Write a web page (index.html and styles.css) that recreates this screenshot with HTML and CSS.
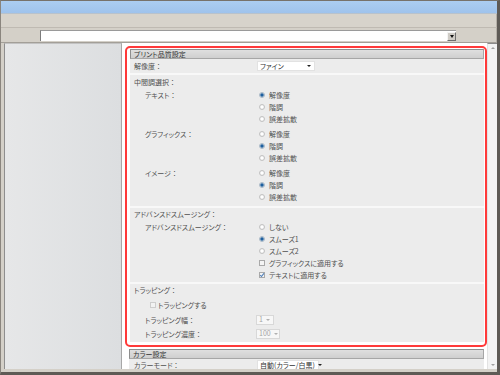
FILE: index.html
```html
<!DOCTYPE html>
<html lang="ja">
<head>
<meta charset="utf-8">
<title>プリント品質設定</title>
<link rel="stylesheet" href="styles.css">
</head>
<body>
<div class="window">
  <div class="titlebar"></div>
  <div class="toolbar"></div>
  <div class="addressbar">
    <div class="combo"><span class="combo-field"></span><span class="combo-btn"><i class="tri"></i></span></div>
  </div>
  <div class="main">
    <aside class="sidebar"></aside>
    <div class="pane">
      <div class="highlight">
        <div class="sec-head">プリント品質設定</div>
        <div class="sec-body">
          <div class="field first sep">
            <div class="label">解像度<span class="c">：</span></div>
            <div class="select w58">ファイン<i class="arrow"></i></div>
          </div>

          <div class="group sep pb3">
            <div class="heading">中間調選択<span class="c">：</span></div>
            <div class="subfield">
              <div class="label sub">テキスト<span class="c">：</span></div>
              <div class="options">
                <div class="opt"><span class="radio on"></span>解像度</div>
                <div class="opt"><span class="radio"></span>階調</div>
                <div class="opt"><span class="radio"></span>誤差拡散</div>
              </div>
            </div>
            <div class="subfield gap">
              <div class="label sub">グラフィックス<span class="c">：</span></div>
              <div class="options">
                <div class="opt"><span class="radio"></span>解像度</div>
                <div class="opt"><span class="radio on"></span>階調</div>
                <div class="opt"><span class="radio"></span>誤差拡散</div>
              </div>
            </div>
            <div class="subfield gap">
              <div class="label sub">イメージ<span class="c">：</span></div>
              <div class="options">
                <div class="opt"><span class="radio"></span>解像度</div>
                <div class="opt"><span class="radio on"></span>階調</div>
                <div class="opt"><span class="radio"></span>誤差拡散</div>
              </div>
            </div>
          </div>

          <div class="group sep pb1">
            <div class="heading">アドバンスドスムージング<span class="c">：</span></div>
            <div class="subfield">
              <div class="label sub">アドバンスドスムージング<span class="c">：</span></div>
              <div class="options">
                <div class="opt"><span class="radio"></span>しない</div>
                <div class="opt"><span class="radio on"></span>スムーズ1</div>
                <div class="opt"><span class="radio"></span>スムーズ2</div>
                <div class="opt"><span class="check"></span>グラフィックスに適用する</div>
                <div class="opt"><span class="check on"><svg viewBox="0 0 6 6" width="6" height="6"><path d="M1.2 3.1 L2.5 4.5 L4.9 1.3" fill="none" stroke="#4f7fb8" stroke-width="1.1"/></svg></span>テキストに適用する</div>
              </div>
            </div>
          </div>

          <div class="group pb2">
            <div class="heading">トラッピング<span class="c">：</span></div>
            <div class="trap-check"><span class="check off"></span>トラッピングする</div>
            <div class="field trap-w">
              <div class="label sub">トラッピング幅<span class="c">：</span></div>
              <div class="select disabled w17">1<i class="arrow"></i></div>
            </div>
            <div class="field trap-d">
              <div class="label sub">トラッピング濃度<span class="c">：</span></div>
              <div class="select disabled w23">100<i class="arrow"></i></div>
            </div>
          </div>
        </div>
      </div>

      <div class="sec-head color-head">カラー設定</div>
      <div class="color-body">
        <div class="field color-row">
          <div class="label">カラーモード<span class="c">：</span></div>
          <div class="select w60">自動(カラー/白黒)<i class="arrow"></i></div>
        </div>
      </div>
    </div>
    <div class="scrollbar"><i class="up"></i><i class="down"></i></div>
  </div>
</div>
</body>
</html>
```

FILE: styles.css
```css
* { box-sizing: border-box; margin: 0; padding: 0; }
html, body { width: 500px; height: 375px; overflow: hidden; background: #d4d0c8; }
body {
  font-family: "Noto Sans CJK JP", "Noto Sans", sans-serif;
  font-size: 7px;
  color: #505050;
  font-feature-settings: "palt";
}
.c { font-feature-settings: normal; }
.window {
  width: 500px;
  height: 375px;
  background: #d4d0c8;
  border-style: solid;
  border-color: #77726b #5e5a55 #5e5a55 #8a857e;
  border-width: 1px 3px 3px 1px;
  padding-bottom: 3px;
  display: flex;
  flex-direction: column;
}
.titlebar {
  height: 13px;
  flex: none;
  background: linear-gradient(#abcdf1, #9fc3ec);
  border-bottom: 1px solid #b8c2cc;
}
.toolbar {
  height: 14px;
  flex: none;
  background: #d7d3cb;
  border-bottom: 1px solid #bfbab2;
  border-right: 1px solid #b5b0a8;
}
.addressbar {
  height: 15px;
  flex: none;
  background: #d4d0c8;
  border-bottom: 1px solid #a39f98;
  border-right: 1px solid #b5b0a8;
  padding: 2px 0 0 39px;
}
.combo {
  width: 416px;
  height: 11px;
  display: flex;
  background: #fff;
  border-left: 1px solid #7c7c7c;
  border-top: 1px solid #9a9a9a;
}
.combo-field { flex: 1; }
.combo-btn {
  width: 9px;
  height: 9px;
  margin-top: 1px;
  background: #cfccc6;
  border: 1px solid;
  border-color: #f4f4f4 #6e6e6e #6e6e6e #f4f4f4;
  display: flex;
  align-items: center;
  justify-content: center;
}
.tri {
  width: 0; height: 0;
  border-left: 2.5px solid transparent;
  border-right: 2.5px solid transparent;
  border-top: 3px solid #111;
}
.main {
  flex: 1;
  display: flex;
  padding-left: 3px;
  min-height: 0;
}
.sidebar {
  width: 118px;
  flex: none;
  border-left: 1px solid #8e8e8e;
  border-right: 1px solid #a8a8a8;
  border-top: 1px solid #c2c2c2;
  background: linear-gradient(to right, #e6e7e8, #dcdee0);
}
.pane {
  width: 365px;
  flex: none;
  background: #fff;
  overflow: hidden;
}
.scrollbar {
  width: 10px;
  flex: none;
  background: #f3f3f3;
  border-top: 1px solid #8a8a8a;
  border-left: 1px solid #e2e2e2;
  display: flex;
  flex-direction: column;
  justify-content: space-between;
  align-items: center;
  padding: 3px 0 3px;
}
.up, .down {
  width: 0; height: 0;
  border-left: 2px solid transparent;
  border-right: 2px solid transparent;
}
.up { border-bottom: 2px solid #a0a0a0; }
.down { border-top: 2px solid #a0a0a0; }

.highlight {
  margin: 3px 0 0 3px;
  border: 2px solid #ff3a3a;
  border-radius: 5px;
  padding: 1px 1px 3px 3px;
  background: #fff;
}
.sec-head {
  height: 10px;
  line-height: 8px;
  padding-left: 3px;
  color: #333;
  background: linear-gradient(#dfdfdf, #cfcfcf);
  border: 1px solid #a6a6a6;
  border-top-color: #8e8e8e;
  border-left-color: #8e8e8e;
  white-space: nowrap;
}
.sec-body {
  background: #ececec;
  padding-bottom: 2px;
}
.sep { border-bottom: 2px solid #f8f8f8; }
.pb3 { padding-bottom: 3px; }
.pb1 { padding-bottom: 1px; }
.pb2 { padding-bottom: 0; }

.field {
  display: flex;
  align-items: center;
}
.field.first { height: 16px; }
.label {
  width: 127px;
  flex: none;
  padding-left: 4px;
  white-space: nowrap;
}
.label.sub { padding-left: 15px; line-height: 12px; }
.heading {
  height: 14px;
  line-height: 14px;
  padding-left: 4px;
  white-space: nowrap;
}
.subfield {
  display: flex;
  align-items: flex-start;
}
.subfield.gap { margin-top: 3px; }
.options { display: flex; flex-direction: column; }
.opt {
  height: 12px;
  display: flex;
  align-items: center;
  white-space: nowrap;
}
.radio {
  width: 6px;
  height: 6px;
  flex: none;
  border-radius: 50%;
  border: 1px solid #c2c2c2;
  background: radial-gradient(circle, #ffffff 30%, #e2e2e2 100%);
  margin: 0 4px 0 2px;
}
.radio.on {
  border-color: #a9b8c6;
  background: radial-gradient(circle, #1f5f9e 0 1.3px, #8fb0d0 1.8px, #e9eef4 2.6px);
}
.check {
  width: 6px;
  height: 6px;
  flex: none;
  border: 1px solid #a9a9a9;
  background: #f4f4f4;
  margin: 0 4px 0 2px;
  display: flex;
  align-items: center;
  justify-content: center;
}
.check.on svg { display: block; margin: -1px; }
.check.off {
  border-color: #cdcdcd;
  background: #f2f2f2;
  margin: 0 2px 0 0;
}

.group.pb1 .heading { height: 13px; line-height: 13px; }
.group.pb2 .heading { height: 13px; line-height: 13px; }

.trap-check {
  height: 15px;
  display: flex;
  align-items: center;
  padding-left: 20px;
  white-space: nowrap;
}
.trap-w { height: 15px; }
.trap-d { height: 13px; }

.select {
  height: 10px;
  line-height: 9px;
  background: #fff;
  border: 1px solid #e2e2e2;
  padding-left: 2px;
  color: #333;
  display: flex;
  align-items: center;
  justify-content: space-between;
  white-space: nowrap;
}
.select .arrow {
  width: 0; height: 0;
  border-left: 2px solid transparent;
  border-right: 2px solid transparent;
  border-top: 2.5px solid #222;
  margin-right: 3px;
  margin-left: 3px;
}
.select.disabled {
  color: #a5a5a5;
  background: #f7f7f7;
  border-color: #d8d8d8;
  margin-left: -1px;
}
.select.disabled .arrow { border-top-color: #b0b0b0; }
.w58 { width: 58px; }
.w17 { width: 18px; }
.w23 { width: 24px; }
.w60 { width: 62px; }

.color-head {
  margin: 2px 3px 0 7px;
}
.color-body {
  margin: 0 3px 0 7px;
  background: #ececec;
}
.color-row { height: 12px; }
.color-row .label { width: 128px; padding-left: 5px; }
```
